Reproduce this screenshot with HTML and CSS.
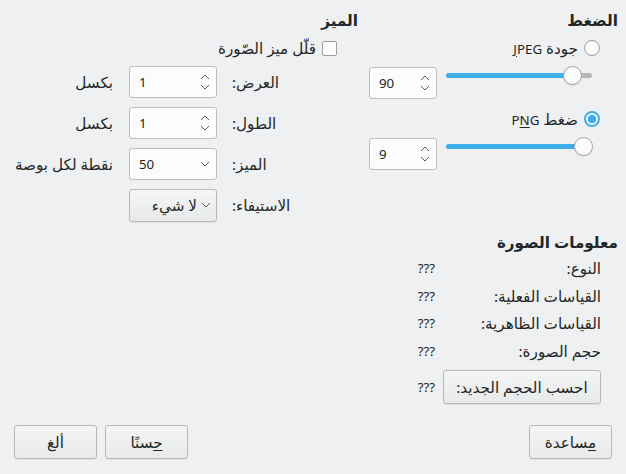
FILE: index.html
```html
<!DOCTYPE html>
<html lang="ar" dir="rtl">
<head>
<meta charset="utf-8">
<title>Export</title>
<link rel="stylesheet" href="styles.css">
</head>
<body>
<div class="dialog">
  <div class="groups">
    <section class="group compression">
      <h2 class="title">الضغط</h2>
      <label class="radio-row first">
        <span class="radio"></span>
        <span>جودة <span class="lat"><u>J</u>PEG</span></span>
      </label>
      <div class="slider-row">
        <div class="spinbox wide">
          <span class="lat">90</span>
          <svg class="spin" width="10" height="16" viewBox="0 0 10 16"><polyline points="1,5 5,1 9,5"/><polyline points="1,11 5,15 9,11"/></svg>
        </div>
        <div class="slider">
          <div class="track" style="background: linear-gradient(to right, #3daee9 0 85%, #b4b6b8 85% 100%);"></div>
          <span class="handle" style="left: 119px;"></span>
        </div>
      </div>
      <label class="radio-row second">
        <span class="radio checked"></span>
        <span>ضغط <span class="lat">P<u>N</u>G</span></span>
      </label>
      <div class="slider-row">
        <div class="spinbox wide">
          <span class="lat">9</span>
          <svg class="spin" width="10" height="16" viewBox="0 0 10 16"><polyline points="1,5 5,1 9,5"/><polyline points="1,11 5,15 9,11"/></svg>
        </div>
        <div class="slider">
          <div class="track" style="background: #3daee9;"></div>
          <span class="handle" style="left: 130px;"></span>
        </div>
      </div>
    </section>

    <section class="group resolution">
      <h2 class="title">الميز</h2>
      <label class="check-row">
        <span class="checkbox"></span>
        <span>قلّل ميز الصّورة</span>
      </label>
      <div class="form">
        <span class="flabel">العرض:</span>
        <div class="spinbox">
          <span class="lat">1</span>
          <svg class="spin" width="10" height="16" viewBox="0 0 10 16"><polyline points="1,5 5,1 9,5"/><polyline points="1,11 5,15 9,11"/></svg>
        </div>
        <span class="unit">بكسل</span>

        <span class="flabel">الطول:</span>
        <div class="spinbox">
          <span class="lat">1</span>
          <svg class="spin" width="10" height="16" viewBox="0 0 10 16"><polyline points="1,5 5,1 9,5"/><polyline points="1,11 5,15 9,11"/></svg>
        </div>
        <span class="unit">بكسل</span>

        <span class="flabel">الميز:</span>
        <div class="spinbox">
          <span class="lat">50</span>
          <svg class="chev" width="10" height="6" viewBox="0 0 10 6"><polyline points="1,1 5,5 9,1"/></svg>
        </div>
        <span class="unit">نقطة لكل بوصة</span>

        <span class="flabel">الاستيفاء:</span>
        <div class="combo">
          <svg class="chev" width="10" height="6" viewBox="0 0 10 6"><polyline points="1,1 5,5 9,1"/></svg>
          <span>لا شيء</span>
        </div>
        <span class="unit"></span>
      </div>
    </section>

    <section class="group info">
      <h2 class="title">معلومات الصورة</h2>
      <div class="info-grid">
        <span class="ilabel">النوع:</span><span class="ival lat">???</span>
        <span class="ilabel">القياسات الفعلية:</span><span class="ival lat">???</span>
        <span class="ilabel">القياسات الظاهرية:</span><span class="ival lat">???</span>
        <span class="ilabel">حجم الصورة:</span><span class="ival lat">???</span>
        <button class="btn calc">احسب الحجم الجديد:</button><span class="ival lat">???</span>
      </div>
    </section>
  </div>

  <div class="buttons">
    <button class="btn std"><u>م</u>ساعدة</button>
    <span class="spacer"></span>
    <button class="btn std"><u>ح</u>سنًا</button>
    <button class="btn std">ألغ</button>
  </div>
</div>
</body>
</html>
```

FILE: styles.css
```css
* { box-sizing: border-box; }

html, body {
  margin: 0;
  padding: 0;
}

body {
  width: 626px;
  height: 474px;
  background: #eff0f1;
  color: #232627;
  font-family: "Noto Sans", "DejaVu Sans", sans-serif;
  font-size: 15.2px;
  line-height: 18px;
  direction: rtl;
  overflow: hidden;
}

.lat {
  font-size: 13.33px;
}

.dialog {
  display: flex;
  flex-direction: column;
  height: 474px;
  padding: 11px 8px 15px 8px;
}

.groups {
  display: grid;
  grid-template-columns: 249px 350px;
  column-gap: 11px;
  row-gap: 12px;
  align-items: start;
}

.title {
  margin: 0;
  font-size: 15.2px;
  font-weight: bold;
  line-height: 18px;
}

/* compression */
.radio-row {
  display: flex;
  align-items: center;
  gap: 6px;
  height: 18px;
  padding-right: 18px;
}
.radio-row.first { margin-top: 10px; }
.radio-row.second { margin-top: 11px; }

.radio {
  width: 16px;
  height: 16px;
  border-radius: 50%;
  border: 1px solid #9a9c9e;
  background: #fcfcfc;
  display: inline-block;
  flex: none;
}
.radio.checked {
  border: 2px solid #3daee9;
  background: radial-gradient(circle, #3daee9 0 4px, #fcfcfc 4.6px);
}

u { text-decoration: underline; text-underline-offset: 2px; }

.slider-row {
  direction: ltr;
  display: flex;
  align-items: flex-start;
  gap: 7px;
  height: 32px;
  margin-top: 10px;
}

.slider {
  position: relative;
  width: 150px;
  height: 19px;
  margin-top: -1px;
  display: flex;
  align-items: center;
}
.track {
  height: 5px;
  width: 146px;
  margin: 0 2px;
  border-radius: 3px;
}
.handle {
  position: absolute;
  top: 0;
  width: 19px;
  height: 19px;
  border-radius: 50%;
  background: #fcfcfc;
  border: 1px solid #a2a4a6;
  box-shadow: 0 1px 1px rgba(0,0,0,0.08);
}

.spinbox {
  direction: ltr;
  display: flex;
  align-items: center;
  justify-content: space-between;
  width: 88px;
  height: 32px;
  padding: 0 6px 0 9px;
  background: #fcfcfc;
  border: 1px solid #bcbebf;
  border-radius: 3px;
}
.spinbox.wide { width: 68px; }

.spin polyline, .chev polyline {
  fill: none;
  stroke: #5b5e60;
  stroke-width: 1;
}

/* resolution */
.check-row {
  display: flex;
  align-items: center;
  gap: 6px;
  height: 18px;
  margin-top: 10px;
  padding-right: 21px;
}
.checkbox {
  width: 15px;
  height: 15px;
  border: 1px solid #9a9c9e;
  border-radius: 2px;
  background: #fcfcfc;
  flex: none;
}

.form {
  display: grid;
  grid-template-columns: 105px 88px 105px;
  column-gap: 15px;
  grid-auto-rows: 32px;
  row-gap: 9px;
  margin-top: 9px;
  padding-right: 21px;
  align-items: center;
}
.form > :nth-child(3n) { margin-right: 1px; }
.flabel { text-align: left; }
.unit { text-align: right; white-space: nowrap; }

.combo {
  display: flex;
  align-items: center;
  gap: 4px;
  width: 88px;
  height: 33px;
  padding: 0 5px;
  border: 1px solid #b7b9bb;
  border-radius: 3px;
  background: linear-gradient(#f4f5f5, #e8e9ea);
  box-shadow: 0 1px 1px rgba(0,0,0,0.06);
}

/* info */
.info {
  grid-column: 1;
}
.info-grid {
  display: grid;
  grid-template-columns: 158px auto;
  column-gap: 8px;
  grid-template-rows: 18px 18px 18px 18px 34px;
  row-gap: 9.7px;
  margin-top: 8px;
  padding-right: 17px;
  align-items: center;
}
.ilabel { text-align: right; }
.ival { text-align: right; }

.btn {
  font: inherit;
  color: #232627;
  height: 34px;
  border: 1px solid #b7b9bb;
  border-radius: 3px;
  background: linear-gradient(#f4f5f5, #e8e9ea);
  box-shadow: 0 1px 1px rgba(0,0,0,0.07);
  padding: 0 8px;
  margin: 0;
}
.calc { width: 158px; }

.buttons {
  margin-top: auto;
  display: flex;
  gap: 8px;
  padding: 0 6px;
}
.spacer { flex: 1; }
.std { width: 83px; }
```
